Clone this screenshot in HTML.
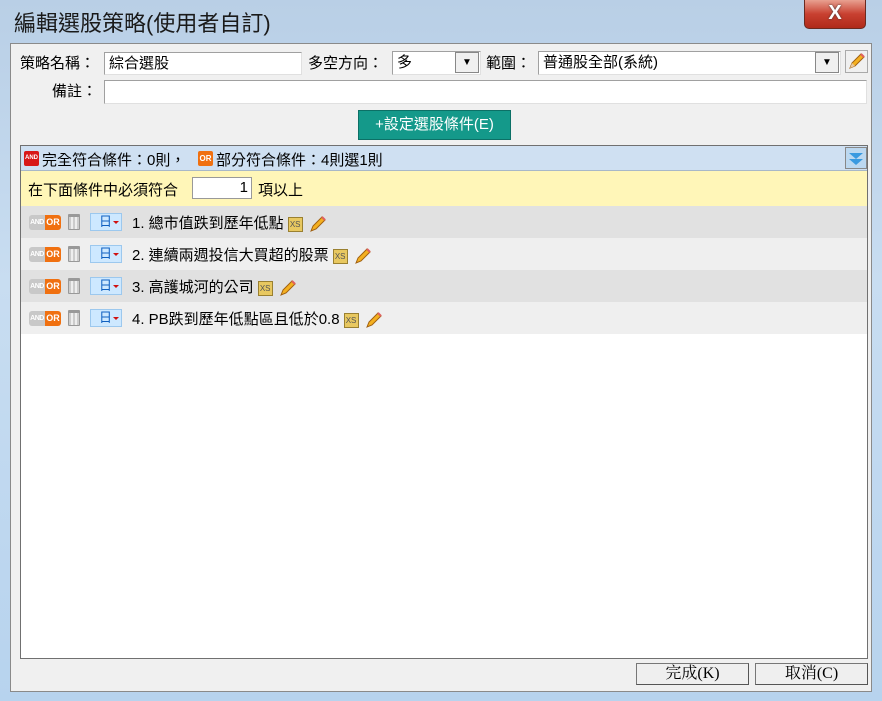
<!DOCTYPE html>
<html><head><meta charset="utf-8"><style>
*{box-sizing:border-box;margin:0;padding:0}
body{width:882px;height:701px;overflow:hidden;background:linear-gradient(180deg,#b9cfe6,#c8ddf1 40%,#b7d3ee);font-family:"Liberation Sans","Noto Sans CJK TC",sans-serif;font-size:15px;color:#000;position:relative}
.a{position:absolute}
.title{left:14px;top:6px;font-size:22px;color:#1a1a1a}
.close{left:804px;top:0;width:62px;height:29px;background:linear-gradient(#e8a090,#c84030 50%,#b02a1a);border:1px solid #6a2a20;border-top:none;border-radius:0 0 5px 5px;color:#fff;font-size:20px;font-weight:bold;text-align:center;line-height:27px;text-shadow:0 0 2px #333}
.panel{left:10px;top:43px;width:862px;height:649px;background:#f0f0f0;border:1px solid #8a8a8a}
.inp{background:#fff;border:1px solid #a0a0a0;border-bottom-color:#e0e0e0;border-right-color:#e0e0e0;height:23px;padding:0 4px;font-size:15px;line-height:21px}
.arr{background:#f0f0f0;border:1px solid #888;width:24px;height:21px;text-align:center;font-size:10px;line-height:20px}
.lbl{font-size:15px}
.list{left:20px;top:145px;width:848px;height:514px;background:#fff;border:1px solid #707070}
.row{position:absolute;left:0;width:846px;height:32px}
.ao{position:absolute;left:8px;top:9px;width:32px;height:15px;font-size:7px;font-weight:bold;color:#fff;display:flex;overflow:hidden}
.ao span{display:block;overflow:hidden}
.ao span:first-child{background:#c8c8c8;width:16px;text-align:center;line-height:15px;border-radius:3px 0 0 3px;letter-spacing:-0.5px}
.ao span:last-child{background:#f07010;width:16px;text-align:center;line-height:15px;border-radius:0 3px 3px 0;font-size:9px}
.tr{position:absolute;left:47px;top:8px;width:12px;height:16px;border:1px solid #999;border-top:3px solid #999;border-radius:1px;background:repeating-linear-gradient(90deg,#ccc 0 2px,#eee 2px 4px)}
.day{position:absolute;left:69px;top:7px;width:32px;height:18px;background:#cde8ff;border:1px solid #9cc8ee;color:#1060c0;font-size:13px;line-height:16px;padding-left:8px}
.day::after{content:"";position:absolute;right:2px;bottom:3px;border:3px solid transparent;border-top:3px solid #d01010}
.txt{position:absolute;left:111px;top:6px;font-size:15px}
.xs{display:inline-block;width:15px;height:15px;background:#e8c860;border:1px solid #9a8030;font-size:8px;line-height:13px;text-align:center;color:#555;vertical-align:middle;margin-left:4px}
.pen{display:inline-block;vertical-align:middle;margin-left:6px}
.btn{background:#efefef;border:1px solid #777;border-right-color:#555;border-bottom-color:#555;height:22px;text-align:center;font-family:"Liberation Serif","Noto Serif CJK SC",serif;font-size:16px;line-height:20px}
</style></head><body>
<div class="a title">編輯選股策略(使用者自訂)</div>
<div class="a close">X</div>
<div class="a panel"></div>
<div class="a lbl" style="left:20px;top:52px">策略名稱：</div>
<div class="a inp" style="left:104px;top:52px;width:198px">綜合選股</div>
<div class="a lbl" style="left:308px;top:52px">多空方向：</div>
<div class="a inp" style="left:392px;top:51px;width:89px;height:24px">多</div>
<div class="a arr" style="left:455px;top:52px">▼</div>
<div class="a lbl" style="left:486px;top:52px">範圍：</div>
<div class="a inp" style="left:538px;top:51px;width:303px;height:24px">普通股全部(系統)</div>
<div class="a arr" style="left:815px;top:52px">▼</div>
<div class="a" style="left:845px;top:50px;width:23px;height:23px;border:1px solid #aaa;background:#f0f0f0">
<svg width="21" height="21" viewBox="0 0 21 21"><path d="M4 17 L6 12 L15 3 L18 6 L9 15 Z" fill="#f4b020" stroke="#a06010" stroke-width="1"/><path d="M4 17 L6 12 L9 15Z" fill="#e8c8a0"/><path d="M15 3 L18 6" stroke="#e06060" stroke-width="2"/></svg></div>
<div class="a lbl" style="left:52px;top:80px">備註：</div>
<div class="a inp" style="left:104px;top:80px;width:763px;height:24px"></div>
<div class="a" style="left:358px;top:110px;width:153px;height:30px;background:#14998a;border:1px solid #0c7066;color:#fff;text-align:center;line-height:28px;font-size:15px">+設定選股條件(E)</div>
<div class="a list">
<div class="row" style="top:0;height:25px;background:#cfe0f2;border-bottom:1px solid #a8b8c8">
<span style="position:absolute;left:3px;top:5px;width:15px;height:15px;background:#d81818;color:#fff;font-size:6px;font-weight:bold;line-height:15px;text-align:center;border-radius:2px;overflow:hidden">AND</span>
<span style="position:absolute;left:21px;top:3px">完全符合條件：0則，</span>
<span style="position:absolute;left:177px;top:5px;width:15px;height:15px;background:#f07010;color:#fff;font-size:8px;font-weight:bold;line-height:15px;text-align:center;border-radius:2px">OR</span>
<span style="position:absolute;left:195px;top:3px">部分符合條件：4則選1則</span>
<span style="position:absolute;left:824px;top:1px;width:22px;height:22px;background:#bcd8f0;border:1px solid #888"><svg width="20" height="20"><path d="M3 5 L10 11 L17 5Z M3 11 L10 17 L17 11Z" fill="#3a9ae0"/></svg></span>
</div>
<div class="row" style="top:25px;height:35px;background:#fff6b8">
<span style="position:absolute;left:7px;top:8px">在下面條件中必須符合</span>
<span style="position:absolute;left:171px;top:6px;width:60px;height:22px;background:#fff;border:1px solid #999;text-align:right;padding-right:3px;line-height:20px">1</span>
<span style="position:absolute;left:237px;top:8px">項以上</span>
</div>
<div class="row" style="top:60px;background:#e1e1e1"><div class="ao"><span>AND</span><span>OR</span></div><div class="tr"></div><div class="day">日</div><div class="txt">1. 總市值跌到歷年低點<span class="xs">XS</span><svg class="pen" width="18" height="18"><path d="M2 16 L4 11 L13 2 L16 5 L7 14Z" fill="#f4b020" stroke="#a06010"/><path d="M13 2 L16 5" stroke="#e06060" stroke-width="2"/></svg></div></div>
<div class="row" style="top:92px;background:#efefef"><div class="ao"><span>AND</span><span>OR</span></div><div class="tr"></div><div class="day">日</div><div class="txt">2. 連續兩週投信大買超的股票<span class="xs">XS</span><svg class="pen" width="18" height="18"><path d="M2 16 L4 11 L13 2 L16 5 L7 14Z" fill="#f4b020" stroke="#a06010"/><path d="M13 2 L16 5" stroke="#e06060" stroke-width="2"/></svg></div></div>
<div class="row" style="top:124px;background:#e1e1e1"><div class="ao"><span>AND</span><span>OR</span></div><div class="tr"></div><div class="day">日</div><div class="txt">3. 高護城河的公司<span class="xs">XS</span><svg class="pen" width="18" height="18"><path d="M2 16 L4 11 L13 2 L16 5 L7 14Z" fill="#f4b020" stroke="#a06010"/><path d="M13 2 L16 5" stroke="#e06060" stroke-width="2"/></svg></div></div>
<div class="row" style="top:156px;background:#efefef"><div class="ao"><span>AND</span><span>OR</span></div><div class="tr"></div><div class="day">日</div><div class="txt">4. PB跌到歷年低點區且低於0.8<span class="xs">XS</span><svg class="pen" width="18" height="18"><path d="M2 16 L4 11 L13 2 L16 5 L7 14Z" fill="#f4b020" stroke="#a06010"/><path d="M13 2 L16 5" stroke="#e06060" stroke-width="2"/></svg></div></div>
</div>
<div class="a btn" style="left:636px;top:663px;width:113px">完成(K)</div>
<div class="a btn" style="left:755px;top:663px;width:113px">取消(C)</div>
</body></html>
